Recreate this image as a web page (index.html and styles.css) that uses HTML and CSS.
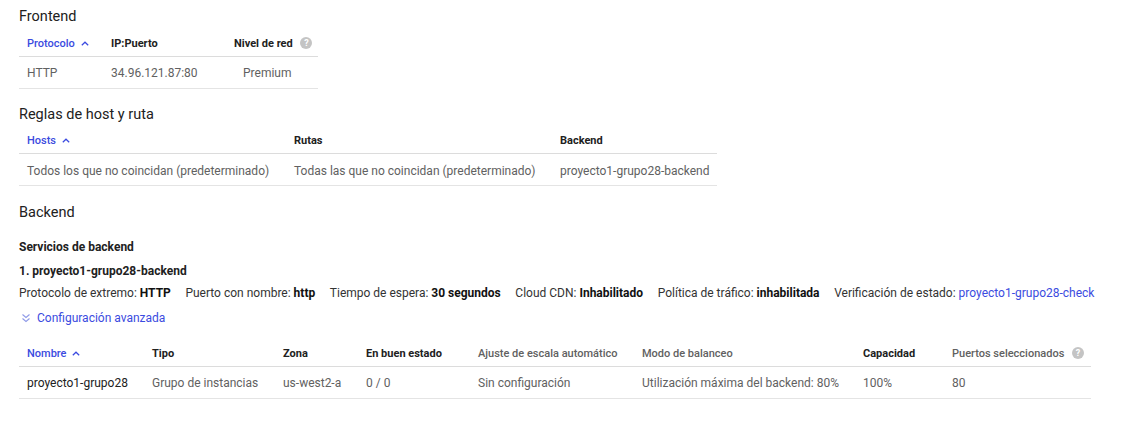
FILE: index.html
```html
<!DOCTYPE html>
<html lang="es">
<head>
<meta charset="utf-8">
<title>Balanceador de cargas</title>
<link rel="stylesheet" href="styles.css">
</head>
<body>
<main class="page">
  <h2 class="heading">Frontend</h2>
  <table class="tbl tbl-front">
    <colgroup><col class="w84"><col class="w123"><col class="w92"></colgroup>
    <thead>
      <tr>
        <th class="sort">Protocolo <svg class="arrow" width="8" height="5" viewBox="0 0 8 5"><path d="M0.8 4.3 L4 1.2 L7.2 4.3" fill="none" stroke="currentColor" stroke-width="1.2"/></svg></th>
        <th>IP:Puerto</th>
        <th>Nivel de red <span class="help">?</span></th>
      </tr>
    </thead>
    <tbody>
      <tr><td>HTTP</td><td>34.96.121.87:80</td><td class="center">Premium</td></tr>
    </tbody>
  </table>

  <h2 class="heading">Reglas de host y ruta</h2>
  <table class="tbl tbl-rules">
    <colgroup><col class="w267"><col class="w266"><col class="w165"></colgroup>
    <thead>
      <tr>
        <th class="sort">Hosts <svg class="arrow" width="8" height="5" viewBox="0 0 8 5"><path d="M0.8 4.3 L4 1.2 L7.2 4.3" fill="none" stroke="currentColor" stroke-width="1.2"/></svg></th>
        <th>Rutas</th>
        <th>Backend</th>
      </tr>
    </thead>
    <tbody>
      <tr><td>Todos los que no coincidan (predeterminado)</td><td>Todas las que no coincidan (predeterminado)</td><td>proyecto1-grupo28-backend</td></tr>
    </tbody>
  </table>

  <h2 class="heading heading-backend">Backend</h2>
  <h3 class="sub sub-first">Servicios de backend</h3>
  <h4 class="sub sub-second">1. proyecto1-grupo28-backend</h4>
  <p class="details">
    <span class="item">Protocolo de extremo: <b>HTTP</b></span>
    <span class="item">Puerto con nombre: <b>http</b></span>
    <span class="item">Tiempo de espera: <b>30 segundos</b></span>
    <span class="item">Cloud CDN: <b>Inhabilitado</b></span>
    <span class="item">Política de tráfico: <b>inhabilitada</b></span>
    <span class="item">Verificación de estado: <a class="link" href="#">proyecto1-grupo28-check</a></span>
  </p>
  <a class="advanced" href="#">
    <svg class="dbl" width="10" height="10" viewBox="0 0 10 10"><path d="M1.5 1.5 L5 4.5 L8.5 1.5 M1.5 5.5 L5 8.5 L8.5 5.5" fill="none" stroke="currentColor" stroke-width="1.1"/></svg>
    Configuración avanzada
  </a>

  <table class="tbl tbl-back">
    <colgroup><col class="w125"><col class="w131"><col class="w83"><col class="w112"><col class="w164"><col class="w221"><col class="w89"><col class="w147"></colgroup>
    <thead>
      <tr>
        <th class="sort">Nombre <svg class="arrow" width="8" height="5" viewBox="0 0 8 5"><path d="M0.8 4.3 L4 1.2 L7.2 4.3" fill="none" stroke="currentColor" stroke-width="1.2"/></svg></th>
        <th>Tipo</th>
        <th>Zona</th>
        <th>En buen estado</th>
        <th class="plain">Ajuste de escala automático</th>
        <th class="plain">Modo de balanceo</th>
        <th>Capacidad</th>
        <th class="plain">Puertos seleccionados <span class="help">?</span></th>
      </tr>
    </thead>
    <tbody>
      <tr><td class="strong">proyecto1-grupo28</td><td>Grupo de instancias</td><td>us-west2-a</td><td>0 / 0</td><td>Sin configuración</td><td>Utilización máxima del backend: 80%</td><td>100%</td><td>80</td></tr>
    </tbody>
  </table>
</main>
</body>
</html>
```

FILE: styles.css
```css
* { box-sizing: border-box; }
html, body { margin: 0; padding: 0; background: #fff; }
body {
  font-family: Roboto, "Liberation Sans", Arial, sans-serif;
  color: #212121;
  -webkit-font-smoothing: antialiased;
}
.page { padding: 7px 0 0 19px; }

.heading {
  margin: 0;
  font-size: 14.5px;
  font-weight: 400;
  line-height: 20px;
  color: #212121;
}
.heading + .tbl { margin-top: 2px; }
.tbl + .heading { margin-top: 16px; }
.tbl + .heading-backend { margin-top: 17px; }

.tbl {
  border-collapse: collapse;
  table-layout: fixed;
}
.tbl-front { width: 299px; }
.tbl-rules { width: 698px; }
.tbl-back { width: 1072px; margin-top: 13px; }

.w84 { width: 84px; } .w123 { width: 123px; } .w92 { width: 92px; }
.w267 { width: 267px; } .w266 { width: 266px; } .w165 { width: 165px; }
.w125 { width: 125px; } .w131 { width: 131px; } .w83 { width: 83px; }
.w112 { width: 112px; } .w164 { width: 164px; } .w221 { width: 221px; }
.w89 { width: 89px; } .w147 { width: 147px; }

.tbl th {
  height: 27px;
  padding: 2px 0 0 8px;
  text-align: left;
  font-size: 11px;
  font-weight: 700;
  color: #212121;
  border-bottom: 1px solid #dcdcdc;
  white-space: nowrap;
  vertical-align: middle;
}
.tbl th.sort { color: #3b4be0; font-weight: 500; }
.tbl th.plain { color: #616161; font-weight: 500; }
.tbl td {
  height: 32px;
  padding: 2px 0 0 8px;
  font-size: 12px;
  color: #616161;
  border-bottom: 1px solid #e4e4e4;
  white-space: nowrap;
  vertical-align: middle;
}
.tbl td.center { padding-left: 17px; }
.tbl td.strong { color: #212121; }

.arrow { margin-left: 3px; vertical-align: 1px; }

.help {
  display: inline-block;
  width: 12px;
  height: 12px;
  margin-left: 5px;
  border-radius: 50%;
  background: #c4c4c4;
  color: #fff;
  font-size: 9px;
  font-weight: 700;
  line-height: 12px;
  text-align: center;
  vertical-align: middle;
  position: relative;
  top: -1px;
}

.sub {
  margin: 0;
  font-size: 12px;
  font-weight: 700;
  line-height: 16px;
  color: #212121;
}
.sub-first { margin-top: 16px; }
.sub-second { margin-top: 8px; }

.details {
  margin: 6px 0 0;
  font-size: 12px;
  line-height: 16px;
  color: #333;
  display: flex;
  gap: 14.6px;
  white-space: nowrap;
}
.details b { color: #111; font-weight: 700; }
.link { color: #3b4be0; text-decoration: none; }

.advanced {
  margin-top: 9px;
  display: flex;
  align-items: center;
  gap: 6px;
  height: 16px;
  padding-left: 2px;
  font-size: 12px;
  color: #3b4be0;
  text-decoration: none;
}
.dbl { color: #8f9ae8; }
```
